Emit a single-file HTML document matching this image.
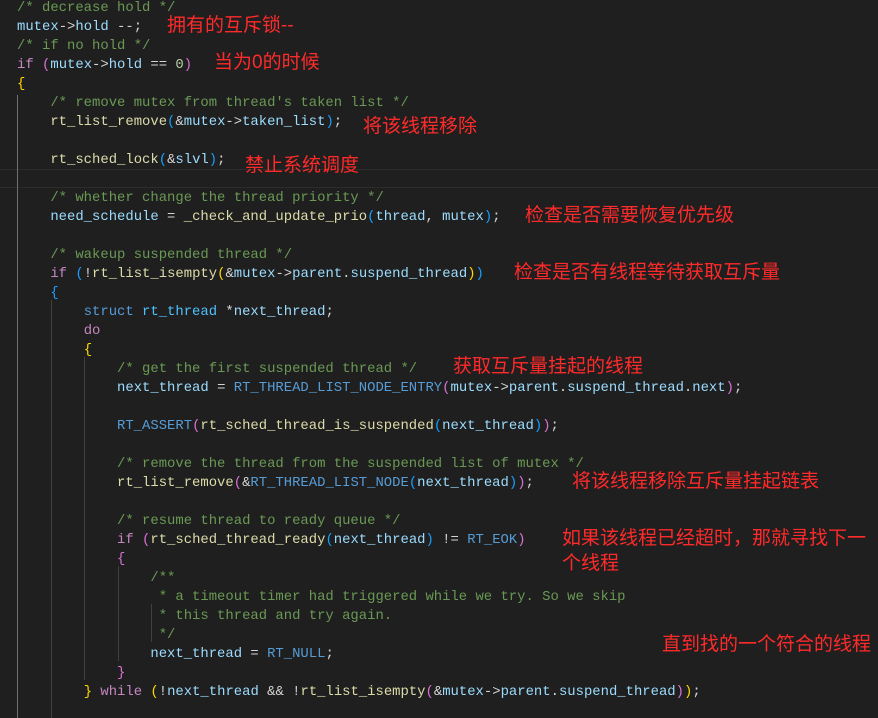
<!DOCTYPE html>
<html><head><meta charset="utf-8"><style>
html,body{margin:0;padding:0;background:#1f1f1f;width:878px;height:718px;overflow:hidden;position:relative}
.l{position:absolute;left:17px;height:19px;line-height:19px;white-space:pre;font-family:"Liberation Mono",monospace;font-size:13.9px;color:#d4d4d4;margin-top:1px}
.c{color:#6a9955}.v{color:#9cdcfe}.f{color:#dcdcaa}.k{color:#c586c0}.b{color:#569cd6}.m{color:#4fc1ff}.n{color:#b5cea8}
.y{color:#ffd700}.p{color:#da70d6}.q{color:#179fff}
.g{position:absolute;width:1px;background:#404040}
.a{position:absolute;color:#ff2a2a;font-family:"Liberation Sans","Noto Sans CJK SC",sans-serif;font-size:19px;line-height:22px;white-space:nowrap}
.cur{position:absolute;left:0;right:0;top:169px;height:17px;border-top:1px solid #2c2c2c;border-bottom:1px solid #2c2c2c}
</style></head><body>
<div class="cur"></div>
<div class="g" style="left:17px;top:95px;height:623px;background:#707070"></div>
<div class="g" style="left:51px;top:300px;height:418px"></div>
<div class="g" style="left:84px;top:357px;height:323px"></div>
<div class="g" style="left:118px;top:566px;height:95px"></div>
<div class="g" style="left:151px;top:604px;height:38px"></div>
<div class="l" style="top:-2px"><span class="c">/* decrease hold */</span></div>
<div class="l" style="top:17px"><span class="v">mutex</span>-&gt;<span class="v">hold</span> --;</div>
<div class="l" style="top:36px"><span class="c">/* if no hold */</span></div>
<div class="l" style="top:55px"><span class="k">if</span> <span class="p">(</span><span class="v">mutex</span>-&gt;<span class="v">hold</span> == <span class="n">0</span><span class="p">)</span></div>
<div class="l" style="top:74px"><span class="y">{</span></div>
<div class="l" style="top:93px">    <span class="c">/* remove mutex from thread's taken list */</span></div>
<div class="l" style="top:112px">    <span class="f">rt_list_remove</span><span class="q">(</span>&amp;<span class="v">mutex</span>-&gt;<span class="v">taken_list</span><span class="q">)</span>;</div>
<div class="l" style="top:150px">    <span class="f">rt_sched_lock</span><span class="q">(</span>&amp;<span class="v">slvl</span><span class="q">)</span>;</div>
<div class="l" style="top:188px">    <span class="c">/* whether change the thread priority */</span></div>
<div class="l" style="top:207px">    <span class="v">need_schedule</span> = <span class="f">_check_and_update_prio</span><span class="q">(</span><span class="v">thread</span>, <span class="v">mutex</span><span class="q">)</span>;</div>
<div class="l" style="top:245px">    <span class="c">/* wakeup suspended thread */</span></div>
<div class="l" style="top:264px">    <span class="k">if</span> <span class="q">(</span>!<span class="f">rt_list_isempty</span><span class="y">(</span>&amp;<span class="v">mutex</span>-&gt;<span class="v">parent</span>.<span class="v">suspend_thread</span><span class="y">)</span><span class="q">)</span></div>
<div class="l" style="top:283px">    <span class="q">{</span></div>
<div class="l" style="top:302px">        <span class="b">struct</span> <span class="m">rt_thread</span> *<span class="v">next_thread</span>;</div>
<div class="l" style="top:321px">        <span class="k">do</span></div>
<div class="l" style="top:340px">        <span class="y">{</span></div>
<div class="l" style="top:359px">            <span class="c">/* get the first suspended thread */</span></div>
<div class="l" style="top:378px">            <span class="v">next_thread</span> = <span class="b">RT_THREAD_LIST_NODE_ENTRY</span><span class="p">(</span><span class="v">mutex</span>-&gt;<span class="v">parent</span>.<span class="v">suspend_thread</span>.<span class="v">next</span><span class="p">)</span>;</div>
<div class="l" style="top:416px">            <span class="b">RT_ASSERT</span><span class="p">(</span><span class="f">rt_sched_thread_is_suspended</span><span class="q">(</span><span class="v">next_thread</span><span class="q">)</span><span class="p">)</span>;</div>
<div class="l" style="top:454px">            <span class="c">/* remove the thread from the suspended list of mutex */</span></div>
<div class="l" style="top:473px">            <span class="f">rt_list_remove</span><span class="p">(</span>&amp;<span class="b">RT_THREAD_LIST_NODE</span><span class="q">(</span><span class="v">next_thread</span><span class="q">)</span><span class="p">)</span>;</div>
<div class="l" style="top:511px">            <span class="c">/* resume thread to ready queue */</span></div>
<div class="l" style="top:530px">            <span class="k">if</span> <span class="p">(</span><span class="f">rt_sched_thread_ready</span><span class="q">(</span><span class="v">next_thread</span><span class="q">)</span> != <span class="b">RT_EOK</span><span class="p">)</span></div>
<div class="l" style="top:549px">            <span class="p">{</span></div>
<div class="l" style="top:568px">                <span class="c">/**</span></div>
<div class="l" style="top:587px">                <span class="c"> * a timeout timer had triggered while we try. So we skip</span></div>
<div class="l" style="top:606px">                <span class="c"> * this thread and try again.</span></div>
<div class="l" style="top:625px">                <span class="c"> */</span></div>
<div class="l" style="top:644px">                <span class="v">next_thread</span> = <span class="b">RT_NULL</span>;</div>
<div class="l" style="top:663px">            <span class="p">}</span></div>
<div class="l" style="top:682px">        <span class="y">}</span> <span class="k">while</span> <span class="y">(</span>!<span class="v">next_thread</span> &amp;&amp; !<span class="f">rt_list_isempty</span><span class="p">(</span>&amp;<span class="v">mutex</span>-&gt;<span class="v">parent</span>.<span class="v">suspend_thread</span><span class="p">)</span><span class="y">)</span>;</div>

<div class="a" style="left:167px;top:15px">拥有的互斥锁--</div>
<div class="a" style="left:214px;top:52px">当为0的时候</div>
<div class="a" style="left:363px;top:116px">将该线程移除</div>
<div class="a" style="left:245px;top:155px">禁止系统调度</div>
<div class="a" style="left:525px;top:205px">检查是否需要恢复优先级</div>
<div class="a" style="left:514px;top:262px">检查是否有线程等待获取互斥量</div>
<div class="a" style="left:453px;top:356px">获取互斥量挂起的线程</div>
<div class="a" style="left:572px;top:471px">将该线程移除互斥量挂起链表</div>
<div class="a" style="left:562px;top:528px">如果该线程已经超时，那就寻找下一</div>
<div class="a" style="left:562px;top:553px">个线程</div>
<div class="a" style="left:662px;top:634px">直到找的一个符合的线程</div>
</body></html>
